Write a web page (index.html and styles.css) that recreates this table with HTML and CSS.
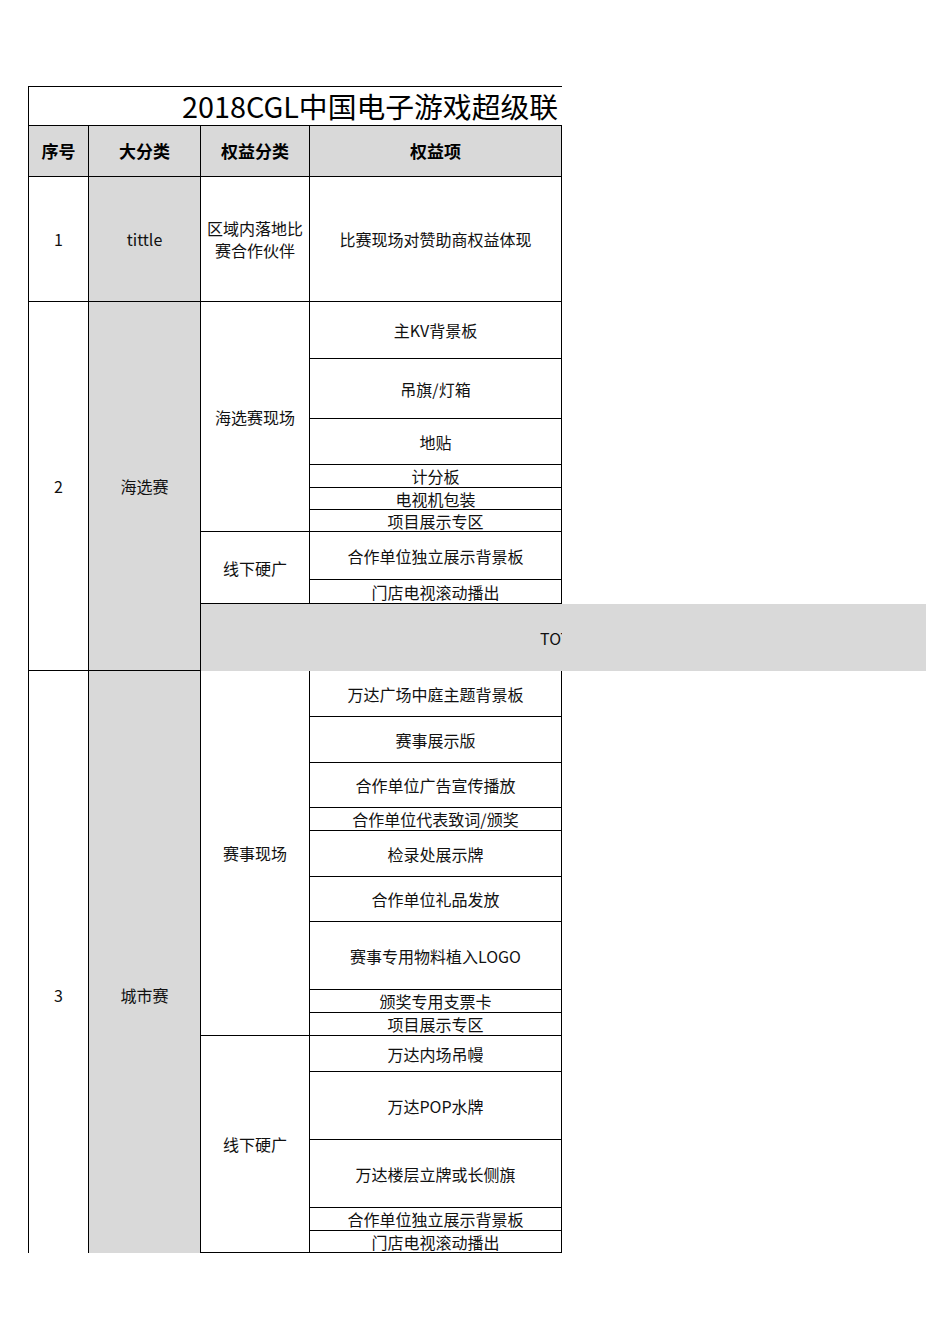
FILE: index.html
```html
<!DOCTYPE html>
<html lang="zh-CN">
<head>
<meta charset="utf-8">
<title>2018CGL</title>
<link rel="stylesheet" href="styles.css">
</head>
<body>
<div class="sheet">
  <div class="title"><span>2018CGL中国电子游戏超级联</span></div>
  <div class="head">
    <div class="cell c1">序号</div>
    <div class="cell c2">大分类</div>
    <div class="cell c3">权益分类</div>
    <div class="cell c4">权益项</div>
  </div>

  <div class="row r1">
    <div class="cell c1">1</div>
    <div class="cell c2 grey">tittle</div>
    <div class="cell c3 wrap">区域内落地比赛合作伙伴</div>
    <div class="cell c4">比赛现场对赞助商权益体现</div>
  </div>

  <div class="row r2">
    <div class="cell c1">2</div>
    <div class="cell c2 grey">海选赛</div>
    <div class="rest">
      <div class="group">
        <div class="cell c3">海选赛现场</div>
        <div class="items">
          <div class="cell item h57">主KV背景板</div>
          <div class="cell item h60">吊旗/灯箱</div>
          <div class="cell item h46">地贴</div>
          <div class="cell item h23">计分板</div>
          <div class="cell item h22">电视机包装</div>
          <div class="cell item h22">项目展示专区</div>
        </div>
      </div>
      <div class="group">
        <div class="cell c3">线下硬广</div>
        <div class="items">
          <div class="cell item h48">合作单位独立展示背景板</div>
          <div class="cell item h24">门店电视滚动播出</div>
        </div>
      </div>
      <div class="total">
        <div class="total-clip"><span>TOTAL</span></div>
      </div>
    </div>
  </div>

  <div class="row r3">
    <div class="cell c1 open">3</div>
    <div class="cell c2 grey open">城市赛</div>
    <div class="rest">
      <div class="group">
        <div class="cell c3">赛事现场</div>
        <div class="items">
          <div class="cell item h46">万达广场中庭主题背景板</div>
          <div class="cell item h46">赛事展示版</div>
          <div class="cell item h45">合作单位广告宣传播放</div>
          <div class="cell item h23">合作单位代表致词/颁奖</div>
          <div class="cell item h46">检录处展示牌</div>
          <div class="cell item h45">合作单位礼品发放</div>
          <div class="cell item h68">赛事专用物料植入LOGO</div>
          <div class="cell item h23">颁奖专用支票卡</div>
          <div class="cell item h23">项目展示专区</div>
        </div>
      </div>
      <div class="group">
        <div class="cell c3">线下硬广</div>
        <div class="items">
          <div class="cell item h36">万达内场吊幔</div>
          <div class="cell item h68">万达POP水牌</div>
          <div class="cell item h68">万达楼层立牌或长侧旗</div>
          <div class="cell item h23">合作单位独立展示背景板</div>
          <div class="cell item h22">门店电视滚动播出</div>
        </div>
      </div>
    </div>
  </div>
</div>
</body>
</html>
```

FILE: styles.css
```css
* { box-sizing: border-box; }

html, body {
  margin: 0;
  padding: 0;
  background: #fff;
}

body {
  font-family: "Noto Sans CJK SC", "Noto Sans", sans-serif;
  color: #111;
  width: 950px;
  height: 1344px;
  overflow: hidden;
}

.sheet {
  margin: 86px 0 0 28px;
  border-left: 1px solid #000;
  width: 898px;
}

.title {
  width: 533px;
  height: 40px;
  border-top: 1px solid #000;
  border-bottom: 1px solid #000;
  overflow: hidden;
  white-space: nowrap;
  padding-left: 153px;
  display: flex;
  align-items: center;
  font-size: 28.8px;
  line-height: 1;
  color: #000;
}

.head {
  display: flex;
  width: 533px;
  height: 51px;
  background: #d9d9d9;
  border-bottom: 1px solid #000;
  font-weight: bold;
  font-size: 17px;
  color: #000;
}

.cell {
  display: flex;
  align-items: center;
  justify-content: center;
  text-align: center;
  border-right: 1px solid #000;
  border-bottom: 1px solid #000;
  font-size: 16px;
  line-height: 22px;
  overflow: hidden;
  white-space: nowrap;
}

.head .cell {
  border-bottom: none;
  font-size: 17px;
}

.c1 { width: 60px; flex: none; }
.c2 { width: 112px; flex: none; }
.c3 { width: 109px; flex: none; }
.c4 { width: 252px; flex: none; }

.grey { background: #d9d9d9; }

.wrap {
  white-space: normal;
  padding: 0 3px;
}

.row { display: flex; }
.r1 { height: 125px; }
.r2 { height: 369px; }
.r3 { height: 582px; }

.rest {
  width: 361px;
  flex: none;
  display: flex;
  flex-direction: column;
}

.group { display: flex; }
.group .c3 { align-self: stretch; }

.items {
  width: 252px;
  flex: none;
  display: flex;
  flex-direction: column;
}

.item { width: 252px; line-height: 1; }

.h22 { height: 22px; }
.h23 { height: 23px; }
.h24 { height: 24px; }
.h36 { height: 36px; }
.h45 { height: 45px; }
.h46 { height: 46px; }
.h48 { height: 48px; }
.h57 { height: 57px; }
.h60 { height: 60px; }
.h68 { height: 68px; }

.open {
  border-bottom: none;
  padding-top: 66px;
}

.total {
  width: 725px;
  height: 67px;
  background: #d9d9d9;
  flex: none;
}

.total-clip {
  width: 361px;
  height: 67px;
  overflow: hidden;
  white-space: nowrap;
  padding-left: 339px;
  display: flex;
  align-items: center;
  font-size: 16px;
  color: #111;
}
```
